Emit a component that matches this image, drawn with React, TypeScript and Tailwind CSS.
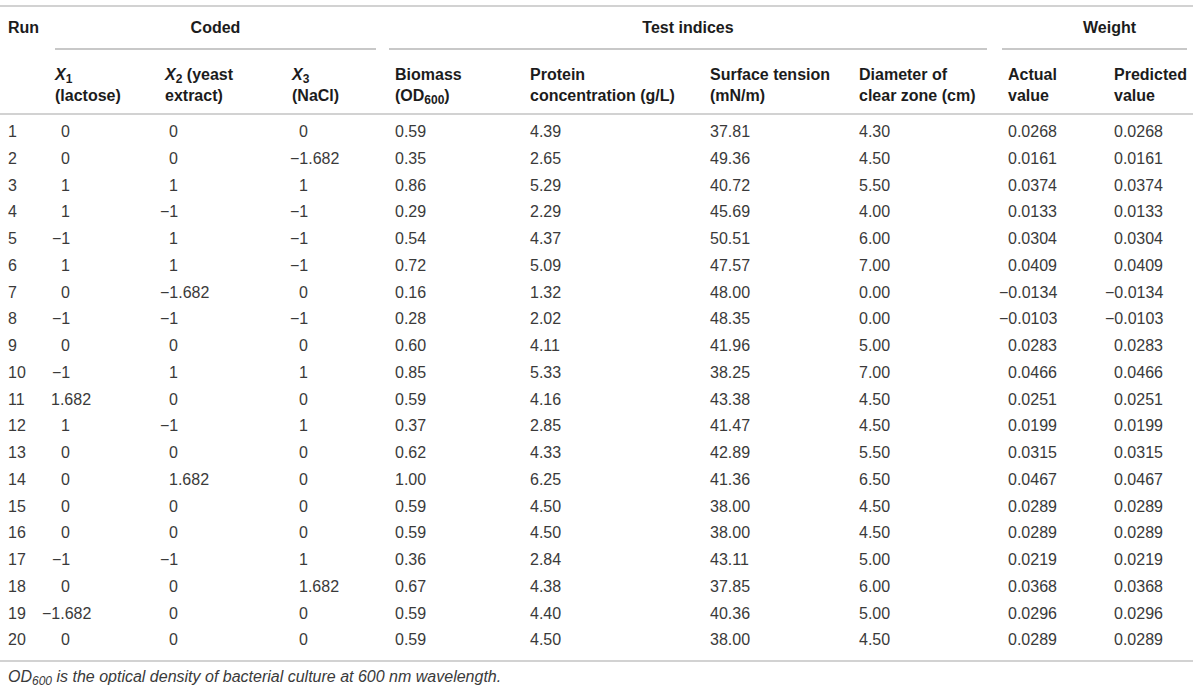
import React from "react";

const rows: string[][] = [
  ["1", "0", "0", "0", "0.59", "4.39", "37.81", "4.30", "0.0268", "0.0268"],
  ["2", "0", "0", "−1.682", "0.35", "2.65", "49.36", "4.50", "0.0161", "0.0161"],
  ["3", "1", "1", "1", "0.86", "5.29", "40.72", "5.50", "0.0374", "0.0374"],
  ["4", "1", "−1", "−1", "0.29", "2.29", "45.69", "4.00", "0.0133", "0.0133"],
  ["5", "−1", "1", "−1", "0.54", "4.37", "50.51", "6.00", "0.0304", "0.0304"],
  ["6", "1", "1", "−1", "0.72", "5.09", "47.57", "7.00", "0.0409", "0.0409"],
  ["7", "0", "−1.682", "0", "0.16", "1.32", "48.00", "0.00", "−0.0134", "−0.0134"],
  ["8", "−1", "−1", "−1", "0.28", "2.02", "48.35", "0.00", "−0.0103", "−0.0103"],
  ["9", "0", "0", "0", "0.60", "4.11", "41.96", "5.00", "0.0283", "0.0283"],
  ["10", "−1", "1", "1", "0.85", "5.33", "38.25", "7.00", "0.0466", "0.0466"],
  ["11", "1.682", "0", "0", "0.59", "4.16", "43.38", "4.50", "0.0251", "0.0251"],
  ["12", "1", "−1", "1", "0.37", "2.85", "41.47", "4.50", "0.0199", "0.0199"],
  ["13", "0", "0", "0", "0.62", "4.33", "42.89", "5.50", "0.0315", "0.0315"],
  ["14", "0", "1.682", "0", "1.00", "6.25", "41.36", "6.50", "0.0467", "0.0467"],
  ["15", "0", "0", "0", "0.59", "4.50", "38.00", "4.50", "0.0289", "0.0289"],
  ["16", "0", "0", "0", "0.59", "4.50", "38.00", "4.50", "0.0289", "0.0289"],
  ["17", "−1", "−1", "1", "0.36", "2.84", "43.11", "5.00", "0.0219", "0.0219"],
  ["18", "0", "0", "1.682", "0.67", "4.38", "37.85", "6.00", "0.0368", "0.0368"],
  ["19", "−1.682", "0", "0", "0.59", "4.40", "40.36", "5.00", "0.0296", "0.0296"],
  ["20", "0", "0", "0", "0.59", "4.50", "38.00", "4.50", "0.0289", "0.0289"],
];

const grid =
  "grid grid-cols-[47px_110px_127px_103px_135px_180px_149px_149px_106px_87px]";

const cellPad = [
  "pl-2",
  "pl-[14px]",
  "pl-[12px]",
  "pl-[15px]",
  "pl-2",
  "pl-2",
  "pl-2",
  "pl-2",
  "pl-2",
  "pl-2",
];

function padFor(i: number, v: string) {
  if (i === 1 && v.includes(".")) return "pl-[4px]";
  return cellPad[i];
}

function Num({ v }: { v: string }) {
  if (v.startsWith("−")) {
    return (
      <span>
        <span className="-ml-[9px]">−</span>
        {v.slice(1)}
      </span>
    );
  }
  return <span>{v}</span>;
}

function X({ n, label }: { n: string; label: string }) {
  return (
    <>
      <span className="italic">X</span>
      <sub className="text-[12px] not-italic">{n}</sub>
      {label}
    </>
  );
}

export default function App() {
  return (
    <div
      className="w-[1200px] h-[692px] bg-white pt-[5px] text-[16px]"
      style={{ fontFamily: '"Liberation Sans", Arial, Helvetica, sans-serif' }}
    >
      <div className="w-[1193px]">
        <div className="h-[2px] bg-[#d2d2d2]" />
        {/* header row 1 */}
        <div className={`${grid} font-bold text-[#1c1c1c] leading-[21px]`}>
          <div className="pl-2 pt-[10px]">Run</div>
          <div className="col-span-3 pl-2 pr-[11px]">
            <div className="pt-[10px] pb-[10px] text-center border-b-2 border-[#c8c8c8]">Coded</div>
          </div>
          <div className="col-span-4 pl-[2px] pr-[13px]">
            <div className="pt-[10px] pb-[10px] text-center border-b-2 border-[#c8c8c8]">Test indices</div>
          </div>
          <div className="col-span-2 pl-[2px] pr-[6px]">
            <div className="pt-[10px] pb-[10px] pl-[30px] text-center border-b-2 border-[#c8c8c8]">Weight</div>
          </div>
        </div>
        {/* header row 2 */}
        <div className={`${grid} font-bold text-[#1c1c1c] leading-[21px] pt-[14px] pb-[7px]`}>
          <div className="pl-2" />
          <div className="pl-2">
            <div><X n="1" label="" /></div>
            <div>(lactose)</div>
          </div>
          <div className="pl-2">
            <div><X n="2" label=" (yeast" /></div>
            <div>extract)</div>
          </div>
          <div className="pl-2">
            <div><X n="3" label="" /></div>
            <div>(NaCl)</div>
          </div>
          <div className="pl-2">
            <div>Biomass</div>
            <div>
              (OD<sub className="text-[12px]">600</sub>)
            </div>
          </div>
          <div className="pl-2">
            <div>Protein</div>
            <div>concentration (g/L)</div>
          </div>
          <div className="pl-2">
            <div>Surface tension</div>
            <div>(mN/m)</div>
          </div>
          <div className="pl-2">
            <div>Diameter of</div>
            <div>clear zone (cm)</div>
          </div>
          <div className="pl-2">
            <div>Actual</div>
            <div>value</div>
          </div>
          <div className="pl-2">
            <div>Predicted</div>
            <div>value</div>
          </div>
        </div>
        <div className="h-[2px] bg-[#d2d2d2]" />
        {/* body */}
        <div className="pt-[4px] pb-[6px] text-[#3a3a3a]">
          {rows.map((r) => (
            <div key={r[0]} className={`${grid} h-[26.75px] leading-[26.75px]`}>
              {r.map((v, i) => (
                <div key={i} className={`${padFor(i, v)} whitespace-nowrap`}>
                  <Num v={v} />
                </div>
              ))}
            </div>
          ))}
        </div>
        <div className="h-[2px] bg-[#d2d2d2]" />
        <div className="pl-2 pt-[4px] leading-[21px] italic text-[#3a3a3a]">
          OD<sub className="text-[12px]">600</sub> is the optical density of bacterial culture at 600 nm wavelength.
        </div>
      </div>
    </div>
  );
}
